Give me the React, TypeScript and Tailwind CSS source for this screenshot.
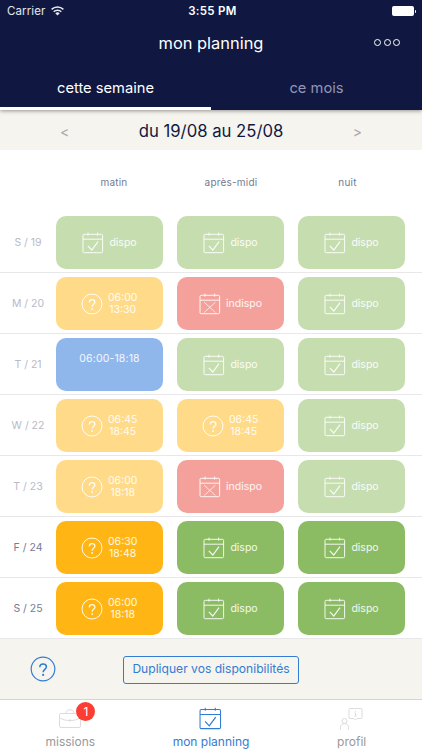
import { ReactNode } from "react";

type Slot = {
  kind: "dispo" | "indispo" | "pending" | "booked";
  start?: string;
  end?: string;
};

const dispo: Slot = { kind: "dispo" };
const indispo: Slot = { kind: "indispo" };

const pending = (start: string, end: string): Slot => ({
  kind: "pending",
  start,
  end,
});

const days: { label: string; past: boolean; slots: Slot[] }[] = [
  { label: "S / 19", past: true, slots: [dispo, dispo, dispo] },
  {
    label: "M / 20",
    past: true,
    slots: [pending("06:00", "13:30"), indispo, dispo],
  },
  {
    label: "T / 21",
    past: true,
    slots: [{ kind: "booked", start: "06:00", end: "18:18" }, dispo, dispo],
  },
  {
    label: "W / 22",
    past: true,
    slots: [pending("06:45", "18:45"), pending("06:45", "18:45"), dispo],
  },
  {
    label: "T / 23",
    past: true,
    slots: [pending("06:00", "18:18"), indispo, dispo],
  },
  {
    label: "F / 24",
    past: false,
    slots: [pending("06:30", "18:48"), dispo, dispo],
  },
  {
    label: "S / 25",
    past: false,
    slots: [pending("06:00", "18:18"), dispo, dispo],
  },
];

const colors = {
  dispo: { past: "bg-[#c6ddb0]", next: "bg-[#8bbb62]" },
  indispo: { past: "bg-[#f4a19c]", next: "bg-[#e94439]" },
  pending: { past: "bg-[#ffda88]", next: "bg-[#ffb514]" },
  booked: { past: "bg-[#8fb7eb]", next: "bg-[#2070d8]" },
};

const CalendarIcon = ({
  crossed,
  className,
}: {
  crossed?: boolean;
  className: string;
}) => (
  <svg viewBox="0 0 22 22" fill="none" stroke="currentColor" className={className}>
    <rect x="1" y="2.3" width="19.6" height="18.4" rx="1.2" />
    <path d="M1 7.2h19.6M6 .6v3M15.6 .6v3" />
    {crossed ? (
      <path d="M5.2 9.2l11.2 10.3M16.4 9.2l-11.2 10.3" strokeWidth=".8" />
    ) : (
      <path d="M5.8 13.8l4 4.2 6.2-8.3" strokeWidth="1.2" />
    )}
  </svg>
);

const QuestionIcon = ({ className }: { className: string }) => (
  <svg viewBox="0 0 22 22" fill="none" stroke="currentColor" className={className}>
    <circle cx="11" cy="11" r="10" />
    <path
      d="M8.3 9.5c0-1.8 1.2-2.8 2.8-2.8s2.8 1 2.8 2.5c0 2.1-2.8 2.2-2.8 4.5"
      strokeWidth="1.3"
    />
    <circle cx="11.1" cy="16" r=".9" fill="currentColor" stroke="none" />
  </svg>
);

const SlotCard = ({ slot, past }: { slot: Slot; past: boolean }) => {
  const color = past ? colors[slot.kind].past : colors[slot.kind].next;
  const base = `flex h-[53px] w-[107px] rounded-[10px] text-[10.5px] text-white/90 ${color}`;

  if (slot.kind === "booked") {
    return (
      <div className={`${base} justify-center pt-[14px] leading-[13px] tracking-[0.15px]`}>
        {slot.start}-{slot.end}
      </div>
    );
  }

  if (slot.kind === "pending") {
    return (
      <div className={`${base} items-center pl-[25px]`}>
        <QuestionIcon className="size-[22px]" />
        <div className="ml-[5px] text-center leading-[12px]">
          <p>{slot.start}</p>
          <p>{slot.end}</p>
        </div>
      </div>
    );
  }

  return (
    <div className={`${base} items-center justify-center gap-[5px]`}>
      <CalendarIcon crossed={slot.kind === "indispo"} className="size-[22px]" />
      <span>{slot.kind}</span>
    </div>
  );
};

const NavItem = ({
  label,
  className,
  children,
}: {
  label: string;
  className: string;
  children: ReactNode;
}) => (
  <div className={`flex w-[140.67px] flex-col items-center pt-[7px] ${className}`}>
    <div className="flex h-[23px] items-center">{children}</div>
    <span className="mt-[4px] text-[12px] leading-[16px]">{label}</span>
  </div>
);

const App = () => {
  return (
    <div className="flex h-[750px] w-[422px] flex-col overflow-hidden bg-white font-['Inter',sans-serif] text-[#111842]">
      <header className="z-10 flex h-[110px] shrink-0 flex-col bg-[#101842] text-white shadow-[0_1px_4px_rgba(0,0,0,0.4)]">
        <div className="grid h-[22px] grid-cols-3 items-center pl-[7px] pr-[6px] text-[11.5px]">
          <div className="flex items-center gap-1.5 text-white/90">
            <span className="pt-px tracking-[0.1px]">Carrier</span>
            <svg viewBox="0 0 13 10" className="h-[10px] w-[13px]" fill="none" stroke="currentColor" strokeWidth="1.5">
              <path d="M.6 3.4a8.4 8.4 0 0 1 11.8 0M2.7 5.7a5.4 5.4 0 0 1 7.6 0" />
              <path d="M6.5 9.6L4.3 7.3a3.2 3.2 0 0 1 4.4 0z" fill="currentColor" stroke="none" />
            </svg>
          </div>
          <span className="pl-0.5 pt-px text-center font-semibold tracking-[0.3px]">3:55 PM</span>
          <div className="flex items-center justify-end gap-px">
            <div className="h-[10px] w-[22px] rounded-[2px] bg-white" />
            <div className="h-[3px] w-px rounded-r bg-white" />
          </div>
        </div>

        <div className="grid h-[42px] grid-cols-[1fr_auto_1fr] items-center">
          <span />
          <h1 className="text-[16.4px] leading-5">mon planning</h1>
          <div className="mb-0.5 flex justify-end gap-[2.5px] pr-[22px]">
            <i className="size-[7px] rounded-full border border-white" />
            <i className="size-[7px] rounded-full border border-white" />
            <i className="size-[7px] rounded-full border border-white" />
          </div>
        </div>

        <nav className="grid flex-1 grid-cols-2 text-center text-[14.7px]">
          <div className="border-b-[3px] border-white pt-[13px]">cette semaine</div>
          <div className="pt-[13px] text-[#9395b4]">ce mois</div>
        </nav>
      </header>

      <div className="flex h-10 shrink-0 items-center justify-between bg-[#f5f4ef] px-[60px] pt-[3px]">
        <span className="text-[14px] text-[#aaa9ac]">&lt;</span>
        <span className="text-[16.7px]">du 19/08 au 25/08</span>
        <span className="text-[14px] text-[#aaa9ac]">&gt;</span>
      </div>

      <div className="flex h-[62px] shrink-0 gap-[14px] pl-[56px] pt-[25px] text-[10px] leading-[14px] tracking-[0.2px] text-[#777a90]">
        <span className="w-[107px] pl-[9px] text-center">matin</span>
        <span className="w-[107px] pl-px text-center">après-midi</span>
        <span className="w-[107px] pr-2 text-center">nuit</span>
      </div>

      <main className="shrink-0">
        {days.map((day) => (
          <div
            key={day.label}
            className="flex h-[61px] items-center border-b border-[#e8e8ea] pt-px"
          >
            <span
              className={`w-[56px] text-center text-[10.5px] ${day.past ? "text-[#b9bac7]" : "text-[#777a92]"}`}
            >
              {day.label}
            </span>
            <div className="flex gap-[14px]">
              {day.slots.map((slot, i) => (
                <SlotCard key={i} slot={slot} past={day.past} />
              ))}
            </div>
          </div>
        ))}
      </main>

      <div className="flex h-[60px] shrink-0 items-center bg-[#f5f4ef] pl-[30px] text-[#337bd3]">
        <QuestionIcon className="size-[26px]" />
        <button className="ml-[67px] mt-px h-[28px] w-[176px] rounded-[3px] border border-[#337bd3] text-[12.1px]">
          Dupliquer vos disponibilités
        </button>
      </div>

      <footer className="flex h-[51px] shrink-0 border-t border-[#d5d5d3]">
        <NavItem label="missions" className="text-[#999]">
          <div className="relative">
            <svg viewBox="0 0 22 19" className="h-[19px] w-[22px]" fill="none" stroke="#dcdcdc">
              <rect x=".5" y="4.5" width="21" height="14" rx="1.5" />
              <path d="M7 4.5C7 2 8.5 .8 11 .8s4 1.2 4 3.7M.5 8.5c3 2.3 6.5 3 10.5 3s7.5-.7 10.5-3M11 9.8v3" />
            </svg>
            <span className="absolute -top-[7px] left-[17px] flex size-[19px] items-center justify-center rounded-full bg-[#fc3d31] text-[12px] text-white">
              1
            </span>
          </div>
        </NavItem>
        <NavItem label="mon planning" className="text-[#337bd3]">
          <CalendarIcon className="size-[23px]" />
        </NavItem>
        <NavItem label="profil" className="text-[#999]">
          <svg viewBox="0 0 24 22" className="mr-px h-[22px] w-[24px]" fill="none" stroke="#dcdcdc">
            <circle cx="5.5" cy="13" r="2.5" />
            <path d="M1.500 21.500v-2c0-2.500 1.500-3.800 4-3.800s4 1.300 4 3.800v2" />
            <path d="M11 .5h11a1 1 0 0 1 1 1v8a1 1 0 0 1-1 1h-4l-1.500 1.500-1.500-1.500h-4a1 1 0 0 1-1-1v-8a1 1 0 0 1 1-1z" />
            <path d="M16.500 2.700v1M15.500 5h1v3M15.300 8h2.400" />
          </svg>
        </NavItem>
      </footer>
    </div>
  );
};

export default App;
